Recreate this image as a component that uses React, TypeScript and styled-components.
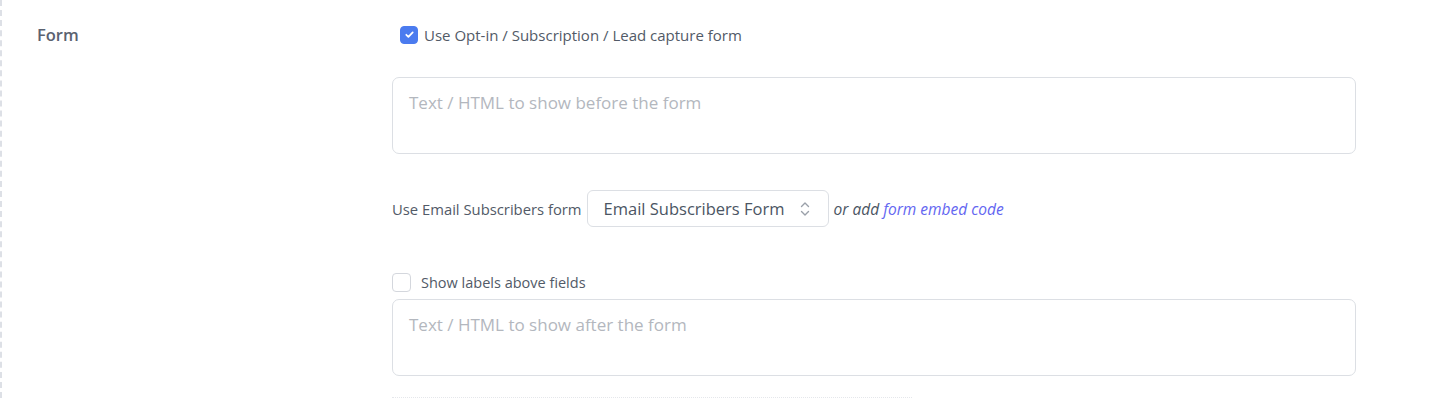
import React from "react";
import styled, { createGlobalStyle } from "styled-components";

const GlobalStyle = createGlobalStyle`
  html, body {
    margin: 0;
    padding: 0;
    background: #fff;
  }
  body {
    font-family: "Open Sans", "Liberation Sans", Arial, sans-serif;
    color: #4b5563;
  }
`;

const Page = styled.div`
  height: 398px;
  overflow: hidden;
  border-left: 2px dashed #dde0e6;
  box-sizing: border-box;
`;

const SettingRow = styled.div`
  display: grid;
  grid-template-columns: 390px 964px;
`;

const SettingLabel = styled.div`
  padding: 25px 0 0 35px;
  font-size: 16.5px;
  font-weight: 600;
  color: #5b6270;
  line-height: 20px;
`;

const SettingBody = styled.div`
  display: flex;
  flex-direction: column;
  padding-top: 25px;
`;

const CheckLine = styled.label<{ $indent?: number; $size: number }>`
  display: flex;
  align-items: center;
  gap: 6px;
  padding-left: ${(p) => p.$indent ?? 0}px;
  font-size: ${(p) => p.$size}px;
  color: #525a67;
  height: 19px;
  cursor: pointer;
`;

const Box = styled.span<{ $checked?: boolean }>`
  flex: none;
  width: ${(p) => (p.$checked ? 18 : 19)}px;
  height: ${(p) => (p.$checked ? 18 : 19)}px;
  border-radius: 4px;
  box-sizing: border-box;
  display: flex;
  align-items: center;
  justify-content: center;
  background: ${(p) => (p.$checked ? "#4b7bef" : "#fff")};
  border: 1px solid ${(p) => (p.$checked ? "#4b7bef" : "#d4d7dd")};
  margin-right: ${(p) => (p.$checked ? 0 : 4)}px;
`;

const TextArea = styled.textarea<{ $top: number }>`
  display: block;
  margin-top: ${(p) => p.$top}px;
  width: 964px;
  height: 77px;
  box-sizing: border-box;
  border: 1px solid #dcdfe4;
  border-radius: 7px;
  padding: 14px 16px;
  font-family: "Open Sans", "Liberation Sans", Arial, sans-serif;
  font-size: 17px;
  line-height: 22px;
  color: #374151;
  resize: none;
  outline: none;

  &::placeholder {
    color: #b3b7be;
  }
`;

const SourceLine = styled.div`
  display: flex;
  align-items: center;
  margin-top: 36px;
  font-size: 14.8px;
  color: #525a67;
  height: 37px;
`;

const Select = styled.div`
  display: flex;
  align-items: center;
  justify-content: space-between;
  margin: 0 5px 0 5px;
  width: 242px;
  height: 37px;
  box-sizing: border-box;
  border: 1px solid #dcdfe4;
  border-radius: 6px;
  padding: 0 17px 0 16px;
  font-size: 16.5px;
  color: #4b5563;
`;

const Hint = styled.span`
  font-style: italic;
  font-size: 15.5px;
  color: #4b5563;

  a {
    color: #6366f1;
    text-decoration: none;
  }
`;

const Spacer = styled.div`
  height: 46px;
`;

const DottedRule = styled.div`
  margin-top: 21px;
  width: 520px;
  border-top: 1px dotted #e5e7eb;
`;

const CheckIcon = () => (
  <svg width="11" height="11" viewBox="0 0 12 12" fill="none">
    <path
      d="M2.5 6.3l2.3 2.3 4.7-5"
      stroke="#fff"
      strokeWidth="1.9"
      strokeLinecap="round"
      strokeLinejoin="round"
    />
  </svg>
);

const UpDown = () => (
  <svg width="12" height="18" viewBox="0 0 12 18" fill="none">
    <path d="M2.5 6.5L6 3l3.5 3.5" stroke="#9aa0a9" strokeWidth="1.4" strokeLinecap="round" strokeLinejoin="round" />
    <path d="M2.5 11.5L6 15l3.5-3.5" stroke="#9aa0a9" strokeWidth="1.4" strokeLinecap="round" strokeLinejoin="round" />
  </svg>
);

const App = () => {
  return (
    <Page>
      <GlobalStyle />
      <SettingRow>
        <SettingLabel>Form</SettingLabel>
        <SettingBody>
          <CheckLine $indent={8} $size={15}>
            <Box $checked>
              <CheckIcon />
            </Box>
            Use Opt-in / Subscription / Lead capture form
          </CheckLine>

          <TextArea $top={33} placeholder="Text / HTML to show before the form" />

          <SourceLine>
            Use Email Subscribers form
            <Select>
              Email Subscribers Form
              <UpDown />
            </Select>
            <Hint>
              or add <a href="#">form embed code</a>
            </Hint>
          </SourceLine>

          <Spacer />
          <CheckLine $size={14.5}>
            <Box />
            Show labels above fields
          </CheckLine>

          <TextArea $top={7} placeholder="Text / HTML to show after the form" />
          <DottedRule />
        </SettingBody>
      </SettingRow>
    </Page>
  );
};

export default App;
